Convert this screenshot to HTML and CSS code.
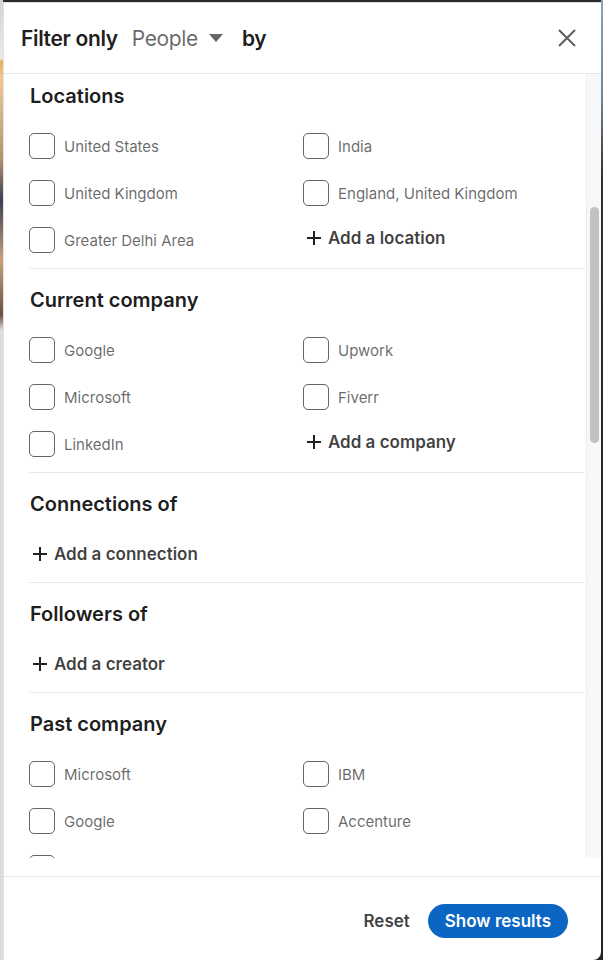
FILE: index.html
```html
<!DOCTYPE html>
<html lang="en">
<head>
  <meta charset="UTF-8">
  <meta name="viewport" content="width=device-width, initial-scale=1.0">
  <title>All filters</title>
  <link rel="stylesheet" href="styles.css">
</head>
<body>
  <div class="edge-left"></div>
  <div class="modal">
    <div class="modal-header">
      <h2 class="title">Filter only
        <span class="type-picker">People
          <svg class="caret" width="14" height="8" viewBox="0 0 14 8"><path d="M0 0h14L7 8z" fill="#666"/></svg>
        </span>
        by</h2>
      <button class="close" aria-label="Dismiss">
        <svg width="20" height="20" viewBox="0 0 20 20"><path d="M2 2l16 16M18 2L2 18" stroke="#5e5e5e" stroke-width="2" fill="none"/></svg>
      </button>
    </div>

    <div class="modal-body">
      <div class="filters">
        <div class="section">
          <h3>Locations</h3>
          <div class="options">
            <label class="option"><span class="box"></span>United States</label>
            <label class="option"><span class="box"></span>India</label>
            <label class="option"><span class="box"></span>United Kingdom</label>
            <label class="option"><span class="box"></span>England, United Kingdom</label>
            <label class="option"><span class="box"></span>Greater Delhi Area</label>
            <button class="add"><svg width="14" height="14" viewBox="0 0 14 14"><path d="M7 0v14M0 7h14" stroke="#222" stroke-width="2"/></svg>Add a location</button>
          </div>
        </div>

        <div class="section">
          <h3>Current company</h3>
          <div class="options">
            <label class="option"><span class="box"></span>Google</label>
            <label class="option"><span class="box"></span>Upwork</label>
            <label class="option"><span class="box"></span>Microsoft</label>
            <label class="option"><span class="box"></span>Fiverr</label>
            <label class="option"><span class="box"></span>LinkedIn</label>
            <button class="add"><svg width="14" height="14" viewBox="0 0 14 14"><path d="M7 0v14M0 7h14" stroke="#222" stroke-width="2"/></svg>Add a company</button>
          </div>
        </div>

        <div class="section">
          <h3>Connections of</h3>
          <button class="add"><svg width="14" height="14" viewBox="0 0 14 14"><path d="M7 0v14M0 7h14" stroke="#222" stroke-width="2"/></svg>Add a connection</button>
        </div>

        <div class="section">
          <h3>Followers of</h3>
          <button class="add"><svg width="14" height="14" viewBox="0 0 14 14"><path d="M7 0v14M0 7h14" stroke="#222" stroke-width="2"/></svg>Add a creator</button>
        </div>

        <div class="section">
          <h3>Past company</h3>
          <div class="options">
            <label class="option"><span class="box"></span>Microsoft</label>
            <label class="option"><span class="box"></span>IBM</label>
            <label class="option"><span class="box"></span>Google</label>
            <label class="option"><span class="box"></span>Accenture</label>
            <label class="option"><span class="box"></span></label>
          </div>
        </div>
      </div>
      <div class="scroll-track"><div class="scroll-thumb"></div></div>
    </div>

    <div class="modal-footer">
      <button class="reset">Reset</button>
      <button class="primary">Show results</button>
    </div>
  </div>
  <div class="edge-right"></div>
</body>
</html>
```

FILE: styles.css
```css
body {
  margin: 0;
  height: 960px;
  display: flex;
  overflow: hidden;
  background: #2a2a2a;
  font-family: Inter, "Noto Sans", sans-serif;
  color: rgba(0, 0, 0, 0.9);
}
button {
  font: inherit;
  border: 0;
  background: none;
  padding: 0;
  cursor: pointer;
}
.edge-left {
  width: 3px;
  flex: none;
  background: linear-gradient(to bottom, #d4d4d4 0, #e9e9e9 58px, #e6ae5c 62px, #efc98f 78px, #d9b48a 110px, #b58f6c 160px, #3c3f55 200px, #c9a07a 260px, #6b4f3e 315px, #dcdcdc 330px, #dcdcdc 960px);
}
.edge-right {
  flex: 1;
  background: linear-gradient(to bottom, #8aa4ba 0, #6d8599 100px, #2d2d2d 180px, #222 960px);
}
.modal {
  width: 598px;
  height: 958px;
  margin-top: 2px;
  flex: none;
  background: #fff;
  border-top: 1px solid #dedede;
  border-left: 1px solid #e2e2e2;
  border-radius: 0 0 8px 0;
  box-sizing: border-box;
  display: flex;
  flex-direction: column;
}

/* header */
.modal-header {
  height: 70px;
  flex: none;
  display: flex;
  align-items: center;
  justify-content: space-between;
  padding: 0 24px 0 17px;
  border-bottom: 1px solid #e8e8e8;
}
.title {
  margin: 0;
  font-size: 21px;
  font-weight: 600;
  letter-spacing: -0.35px;
  display: flex;
  align-items: center;
}
.type-picker {
  display: inline-flex;
  align-items: center;
  margin: 0 19px 0 14px;
  color: rgba(0, 0, 0, 0.6);
  font-weight: 400;
}
.caret { margin-left: 11px; }
.close {
  width: 20px;
  height: 20px;
  display: flex;
}

/* scrolling list */
.modal-body {
  height: 784px;
  flex: none;
  display: flex;
}
.filters {
  flex: 1;
  overflow: hidden;
}
.section {
  margin: 0 1px 0 25px;
  padding: 19px 0 15px;
  border-bottom: 1px solid #e8e8e8;
}
.section:first-child { padding-top: 10px; }
.section h3 {
  margin: 0 0 25px;
  font-size: 20px;
  line-height: 24px;
  font-weight: 600;
  padding-left: 1px;
}
.options {
  display: grid;
  grid-template-columns: 274px 1fr;
  row-gap: 21px;
}
.option {
  display: flex;
  align-items: center;
  gap: 9px;
  height: 26px;
  font-size: 15px;
  color: rgba(0, 0, 0, 0.6);
}
.box {
  width: 26px;
  height: 26px;
  box-sizing: border-box;
  border: 1.3px solid rgba(0, 0, 0, 0.6);
  border-radius: 5px;
}
.add {
  display: flex;
  align-items: center;
  gap: 7px;
  height: 26px;
  padding-left: 4px;
  font-size: 17px;
  font-weight: 600;
  color: rgba(0, 0, 0, 0.75);
}
.options .add { margin-top: -2px; }
.scroll-track {
  width: 14px;
  flex: none;
  background: #f8f8f8;
  border-left: 1px solid #ececec;
}
.scroll-thumb {
  width: 9px;
  height: 236px;
  margin: 133px 0 0 3px;
  border-radius: 5px;
  background: #c2c2c2;
}

/* footer */
.modal-footer {
  flex: 1;
  margin-top: 18px;
  border-top: 1px solid #e8e8e8;
  display: flex;
  justify-content: flex-end;
  align-items: flex-start;
  gap: 18px;
  padding: 27px 33px 0 0;
}
.reset {
  height: 34px;
  font-size: 17px;
  font-weight: 600;
  color: rgba(0, 0, 0, 0.75);
}
.primary {
  height: 34px;
  padding: 0 17px;
  border-radius: 17px;
  background: #0a66c2;
  color: #fff;
  font-size: 17px;
  font-weight: 600;
}
```
